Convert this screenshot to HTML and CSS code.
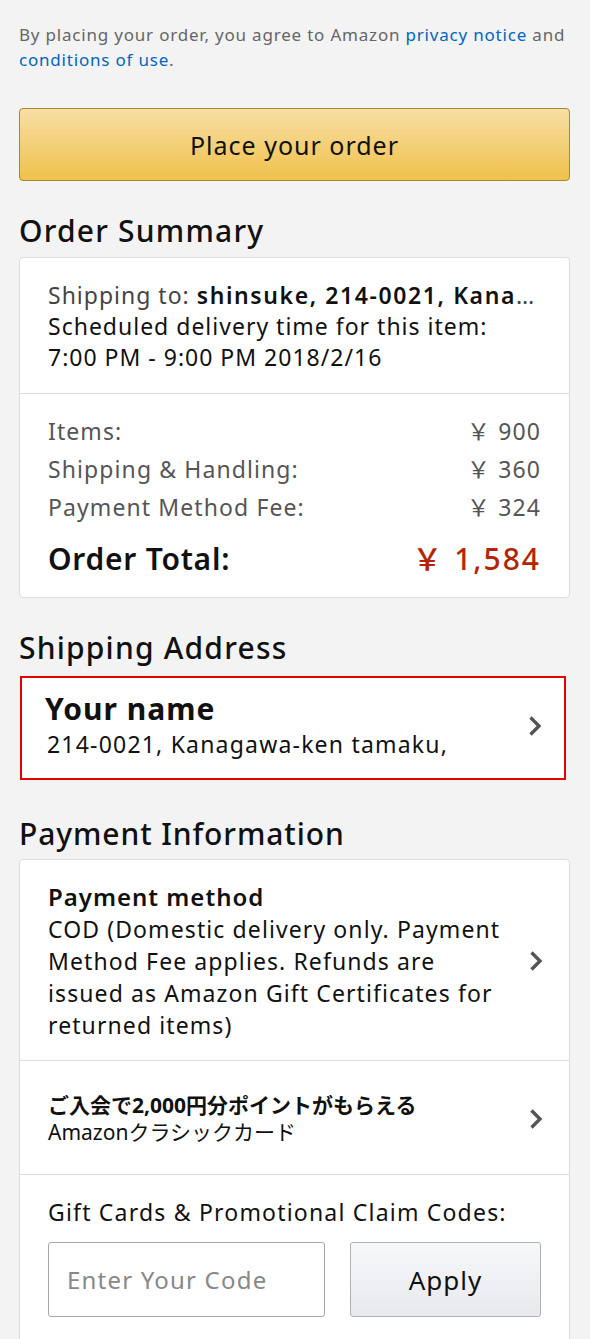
FILE: index.html
```html
<!DOCTYPE html>
<html lang="en">
<head>
<meta charset="utf-8">
<title>Checkout</title>
<link rel="stylesheet" href="styles.css">
</head>
<body>
<div class="page">
  <p class="legal">By placing your order, you agree to Amazon <a href="#">privacy notice</a> and <a href="#">conditions of use</a>.</p>

  <button class="place-order">Place your order</button>

  <h2 class="section-title">Order Summary</h2>
  <div class="card">
    <div class="ship-info">
      <div class="ellipsis">Shipping to: <b>shinsuke, 214-0021, Kanagawa-ken tamaku</b></div>
      <div>Scheduled delivery time for this item:</div>
      <div>7:00 PM - 9:00 PM 2018/2/16</div>
    </div>
    <div class="totals">
      <div class="row"><span>Items:</span><span>￥ 900</span></div>
      <div class="row"><span>Shipping &amp; Handling:</span><span>￥ 360</span></div>
      <div class="row"><span>Payment Method Fee:</span><span>￥ 324</span></div>
      <div class="row total"><span>Order Total:</span><span class="price">￥ 1,584</span></div>
    </div>
  </div>

  <h2 class="section-title">Shipping Address</h2>
  <div class="address-box">
    <div class="address-text">
      <div class="name">Your name</div>
      <div class="addr">214-0021, Kanagawa-ken tamaku,</div>
    </div>
    <svg class="chev" viewBox="0 0 14 22" width="14" height="22"><polyline points="2.5,2.5 11,11 2.5,19.5" fill="none" stroke="#555" stroke-width="3.4"/></svg>
  </div>

  <h2 class="section-title pay-heading">Payment Information</h2>
  <div class="card pay-card">
    <div class="pay-row method">
      <div class="pay-text">
        <div class="pay-title">Payment method</div>
        <div>COD (Domestic delivery only. Payment Method Fee applies. Refunds are issued as Amazon Gift Certificates for returned items)</div>
      </div>
      <svg class="chev" viewBox="0 0 14 22" width="14" height="22"><polyline points="2.5,2.5 11,11 2.5,19.5" fill="none" stroke="#555" stroke-width="3.4"/></svg>
    </div>
    <div class="pay-row promo">
      <div class="pay-text">
        <div class="promo-title">ご入会で2,000円分ポイントがもらえる</div>
        <div class="promo-sub">Amazonクラシックカード</div>
      </div>
      <svg class="chev" viewBox="0 0 14 22" width="14" height="22"><polyline points="2.5,2.5 11,11 2.5,19.5" fill="none" stroke="#555" stroke-width="3.4"/></svg>
    </div>
    <div class="gift">
      <div class="gift-label">Gift Cards &amp; Promotional Claim Codes:</div>
      <div class="gift-form">
        <input class="code-input" type="text" placeholder="Enter Your Code">
        <button class="apply">Apply</button>
      </div>
    </div>
  </div>
</div>
</body>
</html>
```

FILE: styles.css
```css
* { box-sizing: border-box; }
html, body { margin: 0; padding: 0; }
body {
  background: #f3f3f3;
  font-family: "Noto Sans", "Noto Sans CJK JP", sans-serif;
  color: #111;
}
.page {
  padding: 0 20px 0 19px;
}
.legal {
  margin: 0;
  padding-top: 22px;
  font-size: 17px;
  line-height: 25px;
  letter-spacing: 0.8px;
  color: #666;
}
.legal a { color: #0066c0; text-decoration: none; }

.place-order {
  display: block;
  width: 100%;
  height: 73px;
  margin-top: 36px;
  border: 1px solid #a88734;
  border-radius: 4px;
  background: linear-gradient(to bottom, #f7dfa5, #f0c14b);
  font-family: inherit;
  font-size: 25px;
  letter-spacing: 1px;
  color: #111;
}

.section-title {
  margin: 0;
  font-size: 30px;
  line-height: 36px;
  font-weight: 500;
  letter-spacing: 1.2px;
  color: #111;
}
.pay-heading { letter-spacing: 0.9px; }
.place-order + .section-title { margin-top: 32px; }
.card + .section-title { margin-top: 32px; }
.address-box + .section-title { margin-top: 36px; }

.card {
  background: #fff;
  border: 1px solid #ddd;
  border-radius: 4px;
  margin-top: 8px;
}
.pay-card { margin-top: 7px; }
.ship-info {
  padding: 22px 28px 20px 28px;
  font-size: 23px;
  line-height: 31px;
  letter-spacing: 1px;
  color: #111;
  border-bottom: 1px solid #ddd;
}
.ship-info .ellipsis {
  white-space: nowrap;
  overflow: hidden;
  text-overflow: ellipsis;
  color: #444;
}
.ship-info b { color: #111; font-weight: 600; letter-spacing: 1.6px; }

.totals {
  padding: 18px 28px 18px 28px;
}
.row {
  display: flex;
  justify-content: space-between;
  font-size: 23px;
  line-height: 38px;
  letter-spacing: 1.1px;
  color: #555;
}
.row.total {
  margin-top: 13px;
  font-size: 30px;
  line-height: 40px;
  font-weight: 600;
  letter-spacing: 0.75px;
  color: #111;
}
.row.total .price { color: #b12704; font-weight: 500; letter-spacing: 2px; }

.address-box {
  display: flex;
  align-items: center;
  justify-content: space-between;
  background: #fff;
  border: 2px solid #e60000;
  margin-top: 10px;
  margin-right: 4px;
  margin-left: 1px;
  padding: 13px 22px 17px 23px;
}
.address-box .name {
  font-size: 30px;
  line-height: 36px;
  font-weight: 700;
  letter-spacing: 1px;
  color: #111;
}
.address-box .addr {
  padding-left: 2px;
  font-size: 23px;
  line-height: 34px;
  letter-spacing: 1.2px;
  color: #111;
}

.chev { flex: none; }

.pay-row {
  display: flex;
  align-items: center;
  justify-content: space-between;
  border-bottom: 1px solid #ddd;
  padding: 21px 26px 19px 28px;
}
.pay-text { flex: 1; padding-right: 20px; }
.method .pay-text {
  font-size: 23px;
  line-height: 32px;
  letter-spacing: 1.1px;
  color: #111;
}
.pay-title {
  font-weight: 600;
  font-size: 24px;
  letter-spacing: 1px;
}
.promo { padding-top: 31px; padding-bottom: 28px; }
.promo-title {
  font-size: 21px;
  line-height: 27px;
  font-weight: 700;
}
.promo-sub {
  font-size: 21px;
  line-height: 27px;
}

.gift {
  padding: 21px 28px 30px 28px;
}
.gift-label {
  font-size: 23px;
  line-height: 32px;
  letter-spacing: 1.2px;
  color: #111;
}
.gift-form {
  display: flex;
  justify-content: space-between;
  margin-top: 14px;
}
.code-input {
  width: 277px;
  height: 75px;
  border: 1px solid #a6a6a6;
  border-radius: 3px;
  padding: 0 18px;
  font-family: inherit;
  font-size: 24px;
  letter-spacing: 1.2px;
  color: #111;
  background: #fff;
}
.code-input::placeholder { color: #888; }
.apply {
  width: 191px;
  height: 75px;
  border: 1px solid #adb1b8;
  border-radius: 3px;
  background: linear-gradient(to bottom, #f7f8fa, #e7e9ec);
  font-family: inherit;
  font-size: 26px;
  letter-spacing: 1px;
  color: #111;
}
```
